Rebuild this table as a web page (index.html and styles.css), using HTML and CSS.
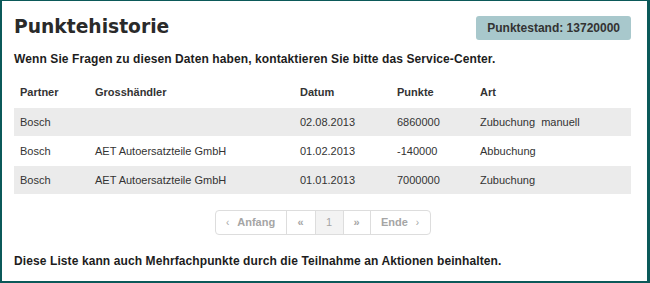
FILE: index.html
```html
<!DOCTYPE html>
<html lang="de">
<head>
<meta charset="utf-8">
<link rel="stylesheet" href="styles.css">
</head>
<body>
<div class="frame">
  <div class="head">
    <h1 class="title">Punktehistorie</h1>
    <span class="badge">Punktestand: 13720000</span>
  </div>
  <p class="intro">Wenn Sie Fragen zu diesen Daten haben, kontaktieren Sie bitte das Service-Center.</p>
  <table class="hist">
    <thead>
      <tr><th class="c1">Partner</th><th class="c2">Grosshändler</th><th class="c3">Datum</th><th class="c4">Punkte</th><th class="c5">Art</th></tr>
    </thead>
    <tbody>
      <tr class="odd"><td>Bosch</td><td></td><td>02.08.2013</td><td>6860000</td><td>Zubuchung&nbsp; manuell</td></tr>
      <tr><td>Bosch</td><td>AET Autoersatzteile GmbH</td><td>01.02.2013</td><td>-140000</td><td>Abbuchung</td></tr>
      <tr class="odd"><td>Bosch</td><td>AET Autoersatzteile GmbH</td><td>01.01.2013</td><td>7000000</td><td>Zubuchung</td></tr>
    </tbody>
  </table>
  <div class="pager-wrap">
    <ul class="pager">
      <li class="pg w-first"><span class="arr">‹</span>Anfang</li>
      <li class="pg w-prev">«</li>
      <li class="pg active">1</li>
      <li class="pg w-next">»</li>
      <li class="pg w-last">Ende<span class="arr r">›</span></li>
    </ul>
  </div>
  <p class="note">Diese Liste kann auch Mehrfachpunkte durch die Teilnahme an Aktionen beinhalten.</p>
</div>
</body>
</html>
```
FILE: styles.css
```css
* { box-sizing: border-box; }
html, body { margin: 0; padding: 0; background: #fff; }
body { width: 650px; height: 283px; overflow: hidden; }
.frame {
  width: 650px; height: 283px;
  border-style: solid; border-color: #0b5959;
  border-width: 1px 3px 2px 2px;
  padding: 14px 16px 0 12px;
  font-family: "Liberation Sans", Arial, sans-serif;
  color: #222;
}
.head { display: flex; justify-content: space-between; align-items: flex-start; height: 26px; }
.title {
  margin: 0; font-family: "DejaVu Sans", Verdana, sans-serif; font-weight: bold;
  font-size: 18.7px; line-height: 24px; color: #2a2a2a;
}
.badge {
  margin-top: 1px;
  background: #a8c8cc; border-radius: 3px;
  padding: 0 11px; height: 24px; line-height: 24px;
  font-size: 12px; font-weight: bold; color: #333;
}
.intro { margin: 11px 0 0; font-size: 12px; font-weight: bold; line-height: 15px; color: #1d1d1d; letter-spacing: 0.1px; }
.hist { width: 100%; margin-top: 10px; border-collapse: collapse; font-size: 11px; color: #333; }
.hist th { text-align: left; font-weight: bold; height: 30px; padding: 0 6px; }
.hist td { height: 29px; padding: 0 6px; border-top: 1px solid #fff; }
.hist tr.odd td { background: #ebebeb; }
.c1 { width: 75px; } .c2 { width: 205px; } .c3 { width: 97px; } .c4 { width: 83px; }
.pager-wrap { display: flex; justify-content: center; margin-top: 16px; }
.pager { list-style: none; margin: 0; padding: 0; display: flex; border: 1px solid #ddd; border-radius: 4px; overflow: hidden; }
.pg { height: 23px; line-height: 22px; font-size: 11px; font-weight: bold; color: #a5a5a5; padding: 0 9px; border-left: 1px solid #ddd; }
.pg:first-child { border-left: 0; }
.w-first { width: 70px; text-align: center; }
.w-prev { width: 29px; text-align: center; }
.active { width: 28px; text-align: center; background: #f3f3f3; font-weight: normal; }
.w-next { width: 27px; text-align: center; }
.w-last { width: 60px; text-align: center; }
.arr { font-weight: normal; margin-right: 8px; font-size: 10px; }
.arr.r { margin: 0 0 0 8px; }
.note { margin: 19px 0 0; font-size: 12px; font-weight: bold; line-height: 15px; color: #1d1d1d; letter-spacing: 0.1px; }
```
